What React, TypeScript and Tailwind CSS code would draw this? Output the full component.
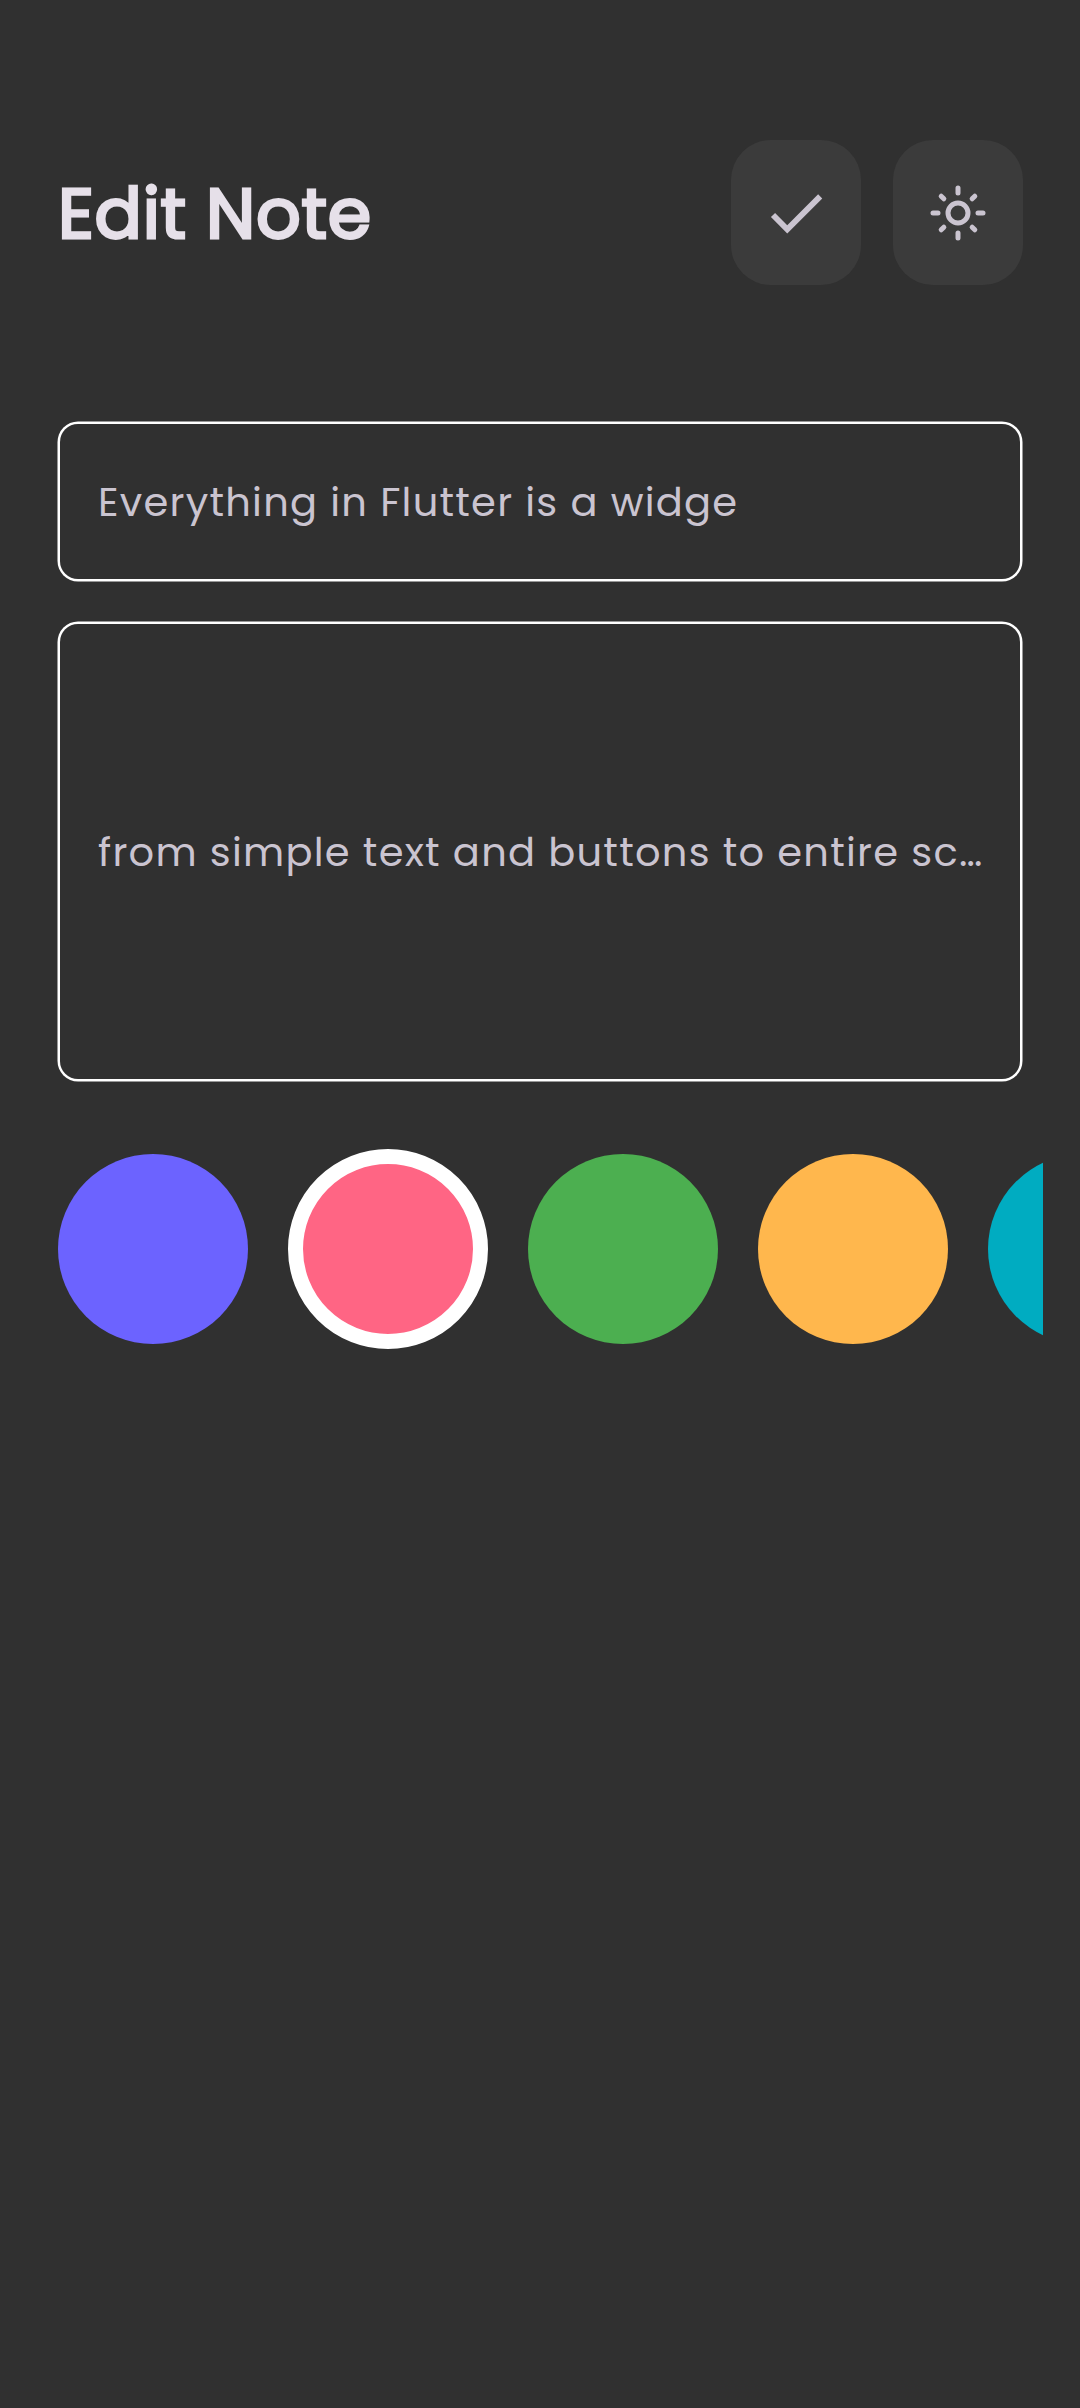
const swatches = [
  { name: 'Indigo', className: 'h-[190px] w-[190px] bg-[#6c63ff]' },
  { name: 'Pink', className: 'h-[200px] w-[200px] border-[15px] border-white bg-[#ff6584]' },
  { name: 'Green', className: 'h-[190px] w-[190px] bg-[#4caf50]' },
  { name: 'Orange', className: 'h-[190px] w-[190px] bg-[#ffb74d]' },
  { name: 'Teal', className: 'h-[190px] w-[190px] bg-[#00acc1]' },
];

function CheckIcon() {
  return (
    <svg viewBox="0 0 24 24" className="h-[70px] w-[70px]" fill="currentColor">
      <path d="M9 16.17L4.83 12l-1.42 1.41L9 19 21 7l-1.41-1.41z" />
    </svg>
  );
}

function SunIcon() {
  return (
    <svg
      viewBox="0 0 24 24"
      className="h-[60px] w-[60px]"
      fill="none"
      stroke="currentColor"
      strokeWidth="2"
      strokeLinecap="round"
    >
      <circle cx="12" cy="12" r="4" />
      <path d="M12 2v2M12 20v2M2 12h2M20 12h2M5.28 5.28l1.06 1.06M17.66 17.66l1.06 1.06M5.28 18.72l1.06-1.06M17.66 6.34l1.06-1.06" />
    </svg>
  );
}

const iconButton =
  'flex h-[145px] w-[129.5px] items-center justify-center rounded-[40px] bg-[#3b3b3b] text-[#cac4d0]';
const field =
  'mx-[2px] flex items-center rounded-[18px] pl-[38px] text-[40px] leading-none tracking-[1.25px] whitespace-nowrap text-[#cac4d0] shadow-[0_0_0_2.5px_#ffffff]';

export default function App() {
  return (
    <div className="flex h-[2408px] w-[1080px] flex-col overflow-hidden bg-[#303030] pt-[140px] pl-[58px] font-[Poppins,Inter,sans-serif]">
      <header className="mr-[57.5px] flex h-[145px] items-center justify-between">
        <h1 className="pt-[3px] text-[70px] leading-none font-normal tracking-[0.7px] text-[#e6e0e9] [-webkit-text-stroke:2.9px_#e6e0e9]">
          Edit Note
        </h1>
        <div className="flex gap-[32.5px]">
          <button aria-label="Save" className={iconButton}>
            <CheckIcon />
          </button>
          <button aria-label="Theme" className={iconButton}>
            <SunIcon />
          </button>
        </div>
      </header>
      <main className="mt-[139px] flex flex-col">
        <div className="mr-[58px] flex flex-col gap-[45px]">
          <div className={`${field} h-[155px]`}>
            <span>Everything in Flutter is a widge</span>
          </div>
          <div className={`${field} h-[455px]`}>
            <span>from simple text and buttons to entire sc…</span>
          </div>
        </div>
        <div className="mt-[70px] mr-[37px] flex items-center gap-10 overflow-hidden">
          {swatches.map((s) => (
            <button key={s.name} aria-label={s.name} className={`${s.className} shrink-0 rounded-full`} />
          ))}
        </div>
      </main>
    </div>
  );
}
